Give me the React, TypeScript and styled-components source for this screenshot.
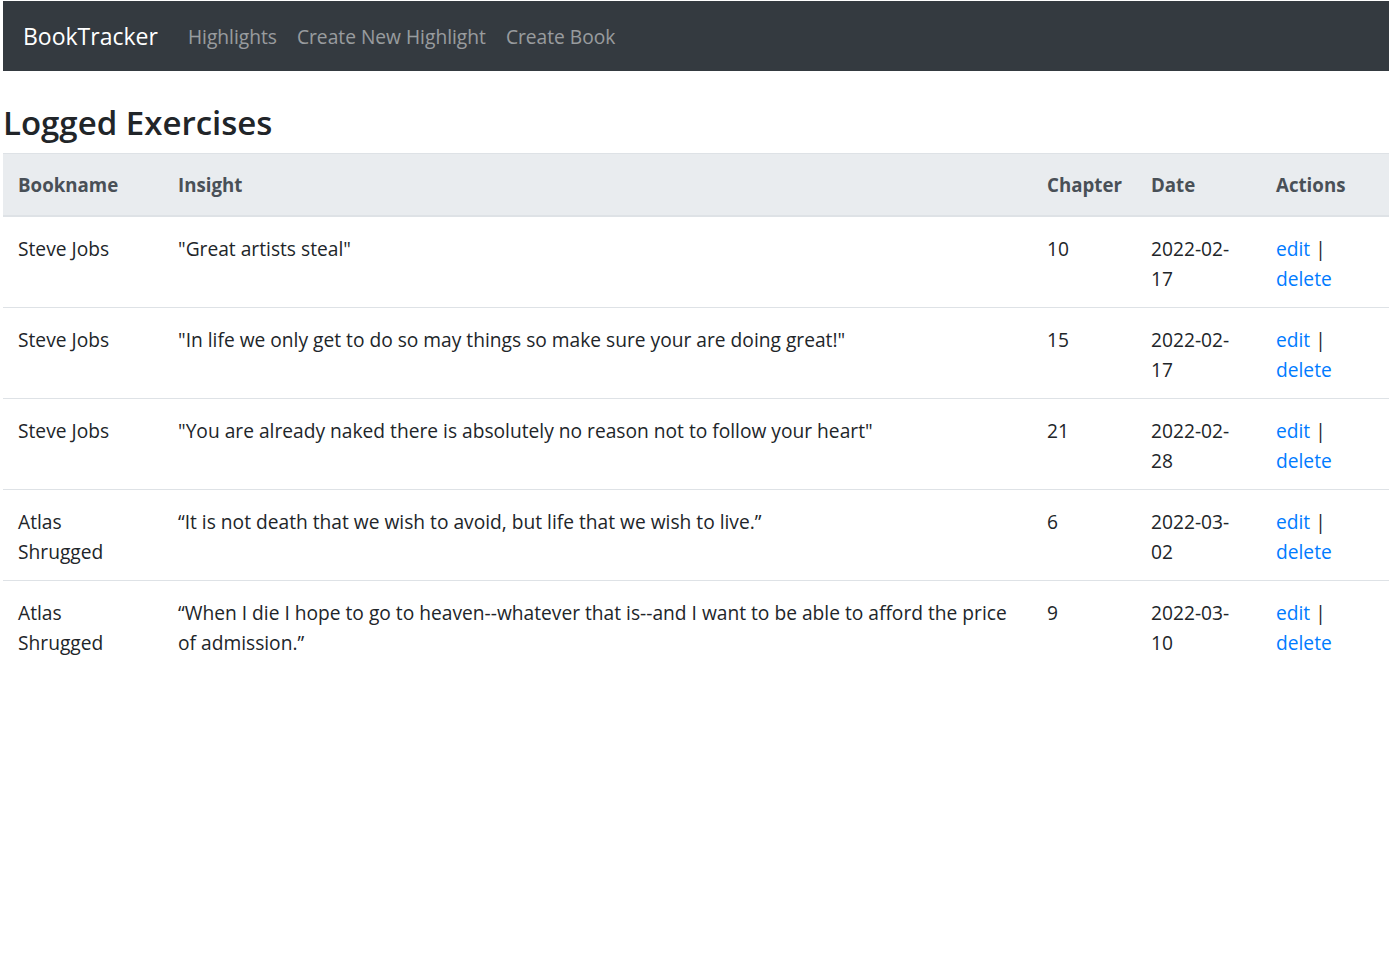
import React from "react";
import styled, { createGlobalStyle } from "styled-components";

const GlobalStyle = createGlobalStyle`
  html, body { margin: 0; padding: 0; background: #fff; }
  body {
    font-family: "Open Sans", "Noto Sans", sans-serif;
    font-size: 19.2px;
    line-height: 30px;
    color: #212529;
  }
  * { box-sizing: border-box; }
`;

const Page = styled.div`
  padding: 1px 2px 0 3px;
`;

const Navbar = styled.nav`
  display: flex;
  align-items: center;
  background: #343a40;
  padding: 10px 20px;
  height: 70px;
`;

const Brand = styled.a`
  color: #fff;
  font-size: 23px;
  line-height: 37.5px;
  margin-right: 20px;
  text-decoration: none;
  padding-top: 2px;
`;

const NavLinks = styled.div`
  display: flex;
  padding-top: 2px;
`;

const NavLink = styled.a`
  color: rgba(255, 255, 255, 0.5);
  padding: 10px;
  text-decoration: none;
  font-size: 19.2px;
  line-height: 30px;
`;

const Heading = styled.h3`
  font-size: 33px;
  font-weight: 600;
  line-height: 42px;
  margin: 31px 0 9px 0;
`;

const Table = styled.table`
  width: 100%;
  border-collapse: collapse;
  table-layout: fixed;
`;

const Th = styled.th<{ $w: number }>`
  width: ${(p) => p.$w}px;
  text-align: left;
  background: #e9ecef;
  color: #495057;
  font-weight: 700;
  font-size: 18.7px;
  padding: 16px 15px 15px;
  vertical-align: bottom;
  border-top: 1px solid #dee2e6;
  border-bottom: 2px solid #dee2e6;
`;

const Td = styled.td`
  padding: 17px 15px 13px;
  vertical-align: top;
  border-top: 1px solid #dee2e6;
`;

const Row = styled.tr`
  &:first-child td { border-top: none; }
`;

const ActionLink = styled.a`
  color: #007bff;
  text-decoration: none;
`;

const rows = [
  { book: "Steve Jobs", insight: '"Great artists steal"', ch: "10", date: "2022-02-17" },
  { book: "Steve Jobs", insight: '"In life we only get to do so may things so make sure your are doing great!"', ch: "15", date: "2022-02-17" },
  { book: "Steve Jobs", insight: '"You are already naked there is absolutely no reason not to follow your heart"', ch: "21", date: "2022-02-28" },
  { book: "Atlas Shrugged", insight: "\u201cIt is not death that we wish to avoid, but life that we wish to live.\u201d", ch: "6", date: "2022-03-02" },
  { book: "Atlas Shrugged", insight: "\u201cWhen I die I hope to go to heaven--whatever that is--and I want to be able to afford the price of admission.\u201d", ch: "9", date: "2022-03-10" },
];

export default function App() {
  return (
    <Page>
      <GlobalStyle />
      <Navbar>
        <Brand href="#">BookTracker</Brand>
        <NavLinks>
          <NavLink href="#">Highlights</NavLink>
          <NavLink href="#">Create New Highlight</NavLink>
          <NavLink href="#">Create Book</NavLink>
        </NavLinks>
      </Navbar>
      <Heading>Logged Exercises</Heading>
      <Table>
        <thead>
          <tr>
            <Th $w={160}>Bookname</Th>
            <Th $w={869}>Insight</Th>
            <Th $w={104}>Chapter</Th>
            <Th $w={125}>Date</Th>
            <Th $w={128}>Actions</Th>
          </tr>
        </thead>
        <tbody>
          {rows.map((r, i) => (
            <Row key={i}>
              <Td>{r.book}</Td>
              <Td>{r.insight}</Td>
              <Td>{r.ch}</Td>
              <Td>{r.date}</Td>
              <Td>
                <ActionLink href="#">edit</ActionLink> |{" "}
                <ActionLink href="#">delete</ActionLink>
              </Td>
            </Row>
          ))}
        </tbody>
      </Table>
    </Page>
  );
}
